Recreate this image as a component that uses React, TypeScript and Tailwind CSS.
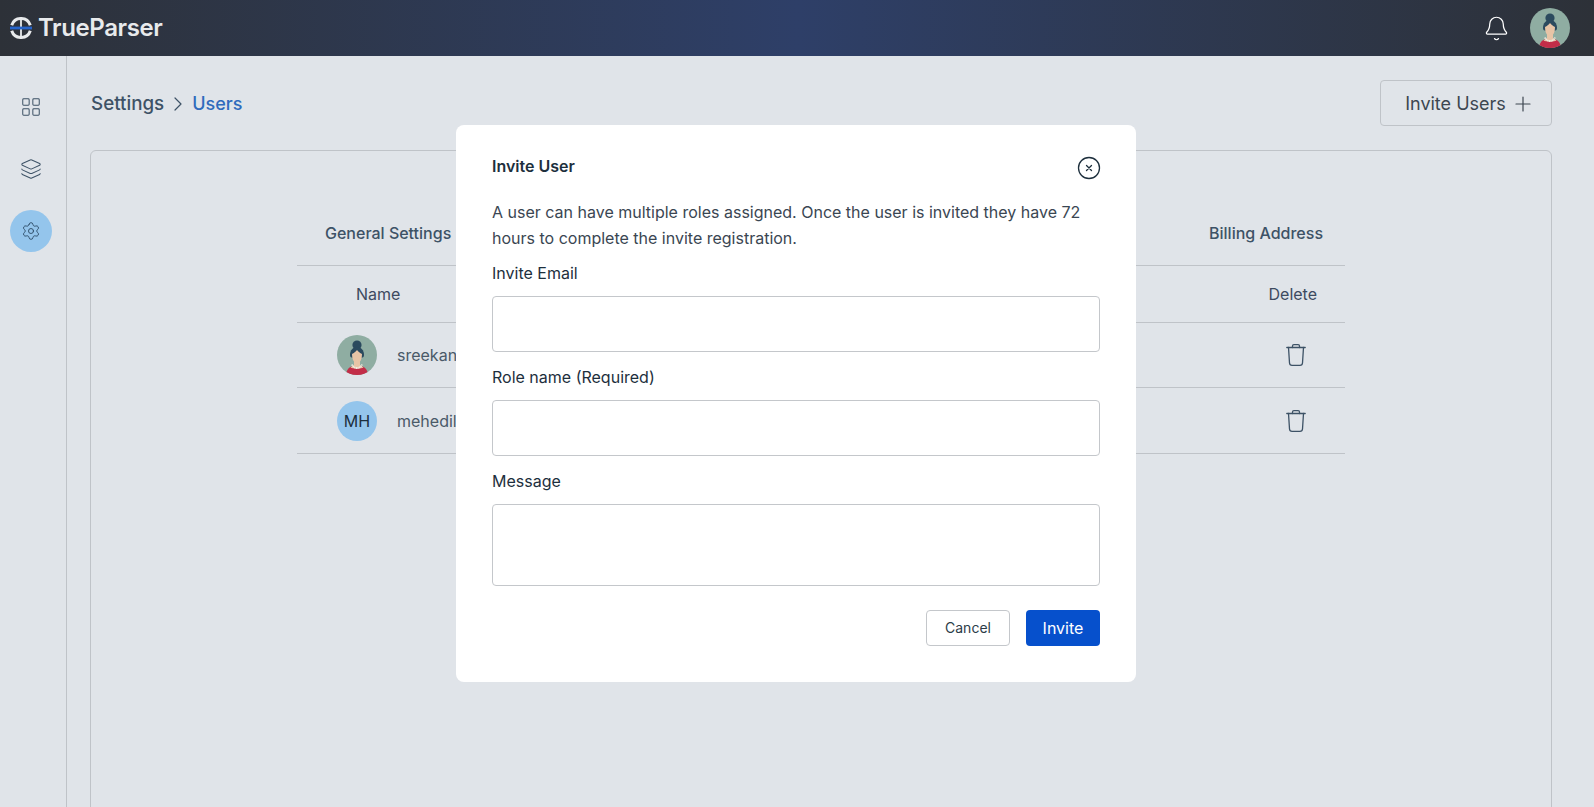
import { Bell, ChevronRight, Layers, LayoutGrid, Plus, Settings } from 'lucide-react';

const Avatar = () => (
  <svg viewBox="0 0 40 40" className="h-10 w-10 shrink-0">
    <defs>
      <clipPath id="avatar-clip">
        <circle cx="20" cy="20" r="20" />
      </clipPath>
    </defs>
    <g clipPath="url(#avatar-clip)">
      <rect width="40" height="40" fill="#8fada2" />
      <path d="M9 41c0-6 3-9 7-10h8c4 1 7 4 7 10z" fill="#c22d48" />
      <circle cx="20" cy="10" r="4.600" fill="#2b4a5e" />
      <path d="M13 20c0-5 3-8 7-8s7 3 7 8c0 1.500-.7 2.500-1.500 2.500h-11c-.8 0-1.500-1-1.500-2.500z" fill="#2b4a5e" />
      <path d="M15 19c2-.8 3.600-2.500 5-4 1.400 1.500 3 3.200 5 4 0 3.500-1 6.500-2 7.500v3.500l3.500 2.500c-2 1.500-11 1.500-13 0l3.500-2.500v-3.500c-1-1-2-4-2-7.500z" fill="#e8c4a6" />
      <path d="M15 29.500c.8 2.300 3 3.500 5 3.500s4.200-1.200 5-3.500" fill="none" stroke="#f1ebe0" strokeWidth="1.800" strokeDasharray="1.300 0.400" />
    </g>
  </svg>
);

const Logo = () => (
  <svg viewBox="0 0 22 22" className="h-[22px] w-[22px] shrink-0">
    <path d="M1.700 8.200A9.800 9.800 0 0 1 20.300 8.200" fill="none" stroke="#e8eaec" strokeWidth="3" />
    <path d="M1.700 13.800A9.800 9.800 0 0 0 20.300 13.800" fill="none" stroke="#e8eaec" strokeWidth="3" />
    <path d="M11 1v20" fill="none" stroke="#e8eaec" strokeWidth="1.800" />
    <rect x="0" y="9.600" width="22" height="2.800" fill="#2563c9" />
  </svg>
);

const Trash = () => (
  <svg viewBox="0 0 22 24" fill="none" stroke="#3d5266" strokeWidth="1.300" strokeLinecap="round" strokeLinejoin="round" className="h-6 w-[22px]">
    <path d="M1.800 4.500h18.400" />
    <path d="M7.500 4.500V3c0-.8.600-1.400 1.400-1.400h4.200c.8 0 1.400.6 1.400 1.400v1.500" />
    <path d="M3.500 4.500l1 15.500c.1 1.500 1 2.400 2.500 2.400h8c1.500 0 2.400-.9 2.500-2.400l1-15.500" />
  </svg>
);

const CloseIcon = () => (
  <svg viewBox="0 0 24 24" fill="none" stroke="#1d2f3d" className="h-6 w-6">
    <circle cx="12" cy="12" r="10.500" strokeWidth="1.300" />
    <path d="M9.500 9.500l5 5M14.500 9.500l-5 5" strokeWidth="1.300" strokeLinecap="round" />
  </svg>
);

const users = [
  { name: 'sreekan', avatar: <Avatar />, height: 'h-[65px]' },
  {
    name: 'mehedil',
    avatar: (
      <div className="flex h-10 w-10 shrink-0 items-center justify-center rounded-full bg-[#94c5ec] text-base text-[#1d2f3d]">
        MH
      </div>
    ),
    height: 'h-[66px]',
  },
];

const Field = ({ label, height }: { label: string; height: string }) => (
  <div>
    <div className="text-base leading-[26px] text-[#1d2f3d]">{label}</div>
    <div className={`mt-[10px] rounded border border-[#c4c7cb] bg-white ${height}`} />
  </div>
);

const InviteModal = () => (
  <div className="absolute left-[456px] top-[125px] h-[557px] w-[680px] rounded-lg bg-white pl-9 pr-9 pt-[29px]">
    <div className="flex items-start justify-between">
      <h2 className="text-base font-semibold leading-6 text-[#1d2f3d]">Invite User</h2>
      <div className="mr-[-1px] mt-[2px]">
        <CloseIcon />
      </div>
    </div>
    <p className="mt-[20px] text-base leading-[25.6px] text-[#3a4652]">
      A user can have multiple roles assigned. Once the user is invited they have 72 hours to complete the invite registration.
    </p>
    <div className="mt-[9px] flex flex-col gap-[12px]">
      <Field label="Invite Email" height="h-[56px]" />
      <Field label="Role name (Required)" height="h-[56px]" />
      <Field label="Message" height="h-[82px]" />
    </div>
    <div className="mt-6 flex justify-end gap-4">
      <button className="h-9 w-[84px] rounded border border-[#c4c7cb] bg-white text-sm text-[#2c3c48]">Cancel</button>
      <button className="h-9 w-[74px] rounded bg-[#0650cc] text-base text-white">Invite</button>
    </div>
  </div>
);

export default function App() {
  return (
    <div className="relative flex h-[807px] flex-col overflow-hidden bg-[#e0e4e9] font-['Inter',sans-serif]">
      <header className="flex h-14 shrink-0 items-center justify-between bg-gradient-to-r from-[#2d3138] via-[#2e3f68] to-[#2d3138] pl-[10px] pr-6">
        <div className="flex items-center gap-[6px]">
          <Logo />
          <span className="text-[24px] font-semibold tracking-[-0.4px] text-[#e8eaec]">TrueParser</span>
        </div>
        <div className="flex items-center gap-[20px]">
          <Bell size={27} strokeWidth={1.1} className="text-white" />
          <Avatar />
        </div>
      </header>

      <div className="flex min-h-0 flex-1">
        <aside className="flex w-[67px] shrink-0 flex-col items-center border-r border-[#bfc3c8] pr-[5px] pt-[40px]">
          <LayoutGrid size={22} strokeWidth={1.1} className="text-[#3d5266]" />
          <Layers size={22} strokeWidth={1.1} className="mt-[40px] text-[#3d5266]" />
          <div className="mt-[30px] flex h-[42px] w-[42px] items-center justify-center rounded-full bg-[#94c5ec]">
            <Settings size={20} strokeWidth={1.1} className="text-[#2c4a66]" />
          </div>
        </aside>

        <main className="min-w-0 flex-1 pl-[23px] pr-[42px] pt-6">
          <div className="flex h-[46px] items-center justify-between">
            <div className="ml-[1px] flex items-center gap-[2px] pt-[2px] text-lg font-medium text-[#3d5266]">
              <span className="text-[18.8px]">Settings</span>
              <ChevronRight size={24} strokeWidth={1.2} />
              <span className="text-[#2f6bbd]">Users</span>
            </div>
            <button className="flex h-[46px] w-[172px] items-center justify-center gap-[5px] rounded border border-[#bfc3c8] pl-[8px] pt-[1px] text-lg text-[#3c4650]">
              Invite Users
              <Plus size={24} strokeWidth={1.2} />
            </button>
          </div>

          <section className="mt-6 h-[700px] rounded-md border border-[#bfc3c8] px-[206px] pt-[52px]">
            <div className="flex h-[63px] items-center justify-between border-b border-[#bfc3c8] pb-[2px] pl-7 pr-[22px] text-base font-medium text-[#3d5266]">
              <span>General Settings</span>
              <span>Billing Address</span>
            </div>
            <div className="flex h-[57px] items-center justify-between border-b border-[#bfc3c8] pl-[59px] pr-7 text-base text-[#3d4a60]">
              <span>Name</span>
              <span>Delete</span>
            </div>
            {users.map((user) => (
              <div key={user.name} className={`flex items-center justify-between border-b border-[#bfc3c8] pl-10 pr-[38px] ${user.height}`}>
                <div className="flex items-center gap-5 text-base text-[#4a5a68]">
                  {user.avatar}
                  <span>{user.name}</span>
                </div>
                <Trash />
              </div>
            ))}
          </section>
        </main>
      </div>

      <InviteModal />
    </div>
  );
}
